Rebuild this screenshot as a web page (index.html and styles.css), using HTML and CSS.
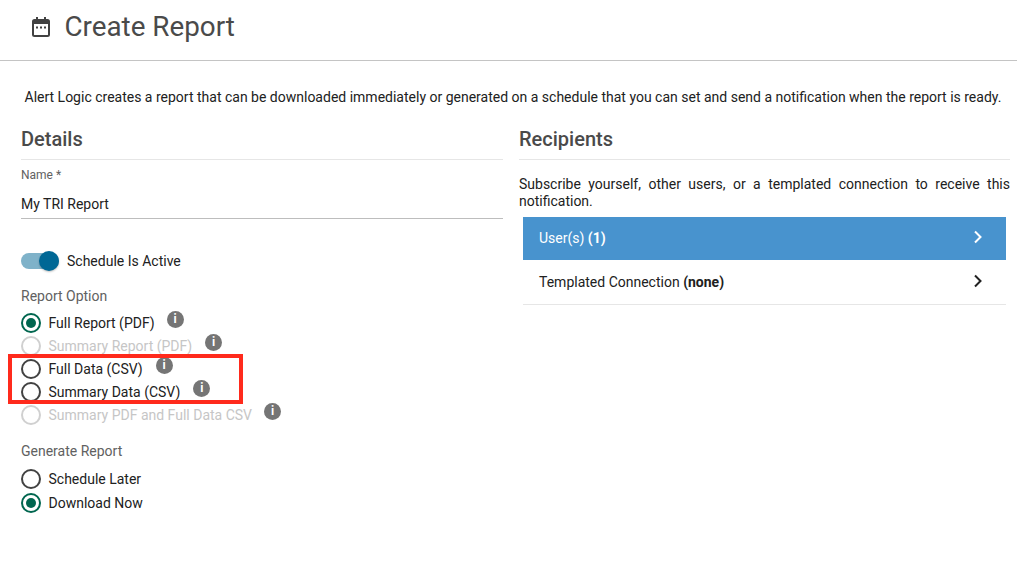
FILE: index.html
```html
<!DOCTYPE html>
<html lang="en">
<head>
<meta charset="utf-8">
<title>Create Report</title>
<link rel="stylesheet" href="styles.css">
</head>
<body>
<header class="top">
  <svg class="cal" width="24" height="24" viewBox="0 0 24 24"><path fill="#424242" d="M7 2h2v2h6V2h2v2h1.500A2.500 2.500 0 0 1 21 6.500v13a2.500 2.500 0 0 1-2.500 2.500h-13A2.500 2.500 0 0 1 3 19.500v-13A2.500 2.500 0 0 1 5.500 4H7zM5 9v10.500a.5.500 0 0 0 .5.500h13a.5.500 0 0 0 .5-.5V9z"/><path fill="#424242" d="M7 11.500h2v2H7zM11 11.500h2v2h-2zM15 11.500h2v2h-2z"/></svg>
  <h1>Create Report</h1>
</header>
<p class="intro">Alert Logic creates a report that can be downloaded immediately or generated on a schedule that you can set and send a notification when the report is ready.</p>
<main class="cols">
  <section class="details">
    <h2>Details</h2>
    <div class="field">
      <div class="flabel">Name *</div>
      <div class="fvalue">My TRI Report</div>
    </div>
    <div class="toggle-row">
      <span class="toggle"><span class="knob"></span></span>
      <span>Schedule Is Active</span>
    </div>
    <div class="group-label">Report Option</div>
    <div class="radios">
      <div class="radio on"><span class="dot"></span><span>Full Report (PDF)</span><span class="info i1">i</span></div>
      <div class="radio off"><span class="dot"></span><span>Summary Report (PDF)</span><span class="info i2">i</span></div>
      <div class="radio"><span class="dot"></span><span>Full Data (CSV)</span><span class="info i3">i</span></div>
      <div class="radio"><span class="dot"></span><span>Summary Data (CSV)</span><span class="info i4">i</span></div>
      <div class="radio off"><span class="dot"></span><span>Summary PDF and Full Data CSV</span><span class="info i5">i</span></div>
    </div>
    <div class="group-label second">Generate Report</div>
    <div class="radios tall">
      <div class="radio"><span class="dot"></span><span>Schedule Later</span></div>
      <div class="radio on"><span class="dot"></span><span>Download Now</span></div>
    </div>
  </section>
  <section class="recipients">
    <h2>Recipients</h2>
    <p class="sub">Subscribe yourself, other users, or a templated connection to receive this notification.</p>
    <div class="rows">
      <div class="row active"><span class="row-text">User(s) <b>(1)</b></span><svg width="12" height="14" viewBox="0 0 12 14"><path d="M3 1.500 8.500 7 3 12.500" fill="none" stroke="#fff" stroke-width="2"/></svg></div>
      <div class="row"><span class="row-text">Templated Connection <b>(none)</b></span><svg width="12" height="14" viewBox="0 0 12 14"><path d="M3 1.500 8.500 7 3 12.500" fill="none" stroke="#212121" stroke-width="2"/></svg></div>
    </div>
  </section>
</main>
<div class="highlight"></div>
</body>
</html>
```
FILE: styles.css
```css
* { box-sizing: border-box; }
html, body { margin: 0; padding: 0; }
body {
  width: 1017px;
  height: 561px;
  overflow: hidden;
  background: #fff;
  color: #212121;
  font-family: Roboto, "Liberation Sans", sans-serif;
  font-size: 14px;
  line-height: 20px;
  position: relative;
}
.top {
  height: 61px;
  border-bottom: 1px solid #c4c4c4;
  display: flex;
  align-items: center;
  padding: 0 0 6px 28.500px;
}
.cal { display: block; margin-right: 12px; }
h1 {
  margin: 0;
  font-size: 27.800px;
  font-weight: 400;
  line-height: 36px;
  color: #4a4a4a;
}
.intro {
  margin: 26px 0 0;
  height: 20px;
  padding-left: 24.500px;
  font-size: 14px;
  white-space: nowrap;
}
.cols {
  display: flex;
  margin-top: 20px;
  padding-left: 21px;
}
.details { width: 482px; margin-right: 16px; }
.recipients { width: 491px; }
h2 {
  margin: 0;
  height: 33px;
  font-size: 20px;
  font-weight: 500;
  line-height: 24px;
  color: #4a4a4a;
  border-bottom: 1px solid #e6e6e6;
}
.field {
  height: 59px;
  border-bottom: 1px solid #bdbdbd;
  padding-top: 7px;
}
.flabel { font-size: 12px; line-height: 16px; color: #616161; }
.fvalue { margin-top: 11px; line-height: 20px; }
.toggle-row {
  display: flex;
  align-items: center;
  margin-top: 31px;
  height: 22px;
}
.toggle {
  width: 38px;
  height: 16px;
  margin-right: 8px;
  background: #7fb2c9;
  border-radius: 8px;
  position: relative;
  flex: none;
}
.knob {
  position: absolute;
  right: 0;
  top: -2px;
  width: 20px;
  height: 20px;
  border-radius: 50%;
  background: #006795;
  box-shadow: 0 1px 2px rgba(0, 0, 0, .25);
}
.group-label { margin-top: 14px; color: #616161; height: 20px; }
.group-label.second { margin-top: 15px; }
.radios { margin-top: 5px; }
.radios.tall { margin-top: 6px; }
.radio {
  display: flex;
  align-items: center;
  height: 23px;
  position: relative;
}
.radios.tall .radio { height: 24px; }
.dot {
  width: 20px;
  height: 20px;
  margin-right: 7.500px;
  border: 2px solid #424242;
  border-radius: 50%;
  background: #fff;
  flex: none;
  position: relative;
}
.radio.on .dot { border-color: #00664f; }
.radio.on .dot::after {
  content: "";
  position: absolute;
  left: 3px;
  top: 3px;
  width: 10px;
  height: 10px;
  border-radius: 50%;
  background: #00664f;
}
.radio.off { color: #c6c6c6; }
.radio.off .dot { border-color: #d0d0d0; }
.info {
  width: 17px;
  height: 17px;
  border-radius: 50%;
  background: #757575;
  color: #fff;
  font-size: 12px;
  font-weight: 700;
  line-height: 17px;
  text-align: center;
  flex: none;
  position: relative;
  top: -3px;
}
.i1 { margin-left: 12px; }
.i2 { margin-left: 13px; }
.i3 { margin-left: 13px; }
.i4 { margin-left: 13px; }
.i5 { margin-left: 12px; }
.sub {
  margin: 16px 0 0;
  line-height: 17px;
  text-align: justify;
}
.rows { margin: 7px 4px 0 4px; }
.row {
  height: 44px;
  padding: 0 22px 0 16px;
  display: flex;
  align-items: center;
  justify-content: space-between;
  border-bottom: 1px solid #e6e6e6;
}
.row-text { margin-top: -1px; }
.row b { font-weight: 700; }
.row svg { margin-top: -3px; }
.row.active {
  height: 43px;
  margin-bottom: 1px;
  background: #4893ce;
  color: #fff;
  border-bottom: 0;
}
.highlight {
  position: absolute;
  left: 8px;
  top: 354px;
  width: 235px;
  height: 50px;
  border: 4px solid #ff2a1c;
  pointer-events: none;
}
```
